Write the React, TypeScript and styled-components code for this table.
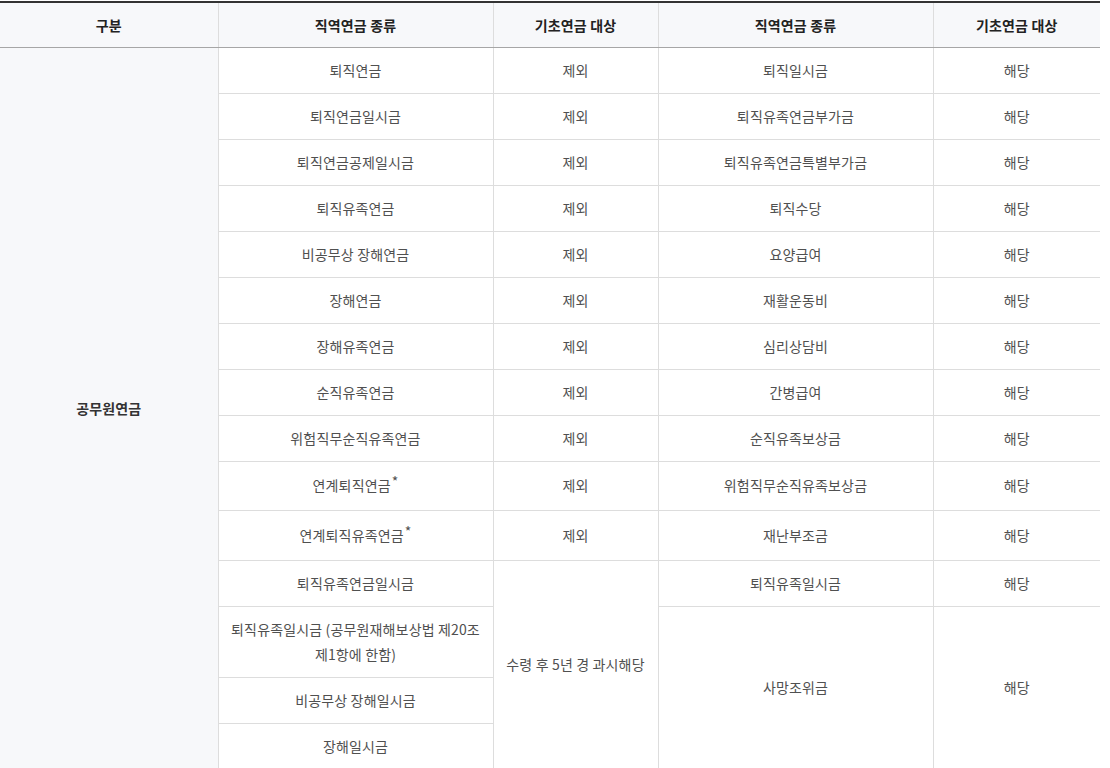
import React from 'react'
import styled, { createGlobalStyle } from 'styled-components'

const GlobalStyle = createGlobalStyle`
  html, body {
    margin: 0;
    padding: 0;
    background: #fff;
  }
  body {
    font-family: 'Noto Sans CJK KR', 'Noto Sans', sans-serif;
  }
`

const Wrapper = styled.div`
  width: 1100px;
  padding-top: 1px;
`

const Table = styled.table`
  width: 1100px;
  table-layout: fixed;
  border-collapse: collapse;
  border-top: 2px solid #333;
  font-size: 14px;
  letter-spacing: 0.15px;
`

const Th = styled.th`
  height: 45px;
  padding: 0 10px;
  box-sizing: border-box;
  background: #f7f8fa;
  color: #222;
  font-weight: 700;
  text-align: center;
  border-bottom: 1px solid #a6a6a6;
  border-left: 1px solid #ddd;
  &:first-child {
    border-left: none;
  }
`

const Tr = styled.tr<{ $star?: boolean }>`
  height: ${p => (p.$star ? '49.5px' : 'auto')};
`

const Td = styled.td<{ $shaded?: boolean }>`
  padding: 10px;
  line-height: 25px;
  text-align: center;
  vertical-align: middle;
  color: ${p => (p.$shaded ? '#333' : '#505050')};
  font-weight: ${p => (p.$shaded ? 700 : 400)};
  background: ${p => (p.$shaded ? '#f7f8fa' : '#fff')};
  border-bottom: 1px solid #ddd;
  border-left: ${p => (p.$shaded ? 'none' : '1px solid #ddd')};
  word-break: keep-all;
`

const Mark = styled.sup`
  font-size: 14px;
  line-height: 0;
  vertical-align: 4px;
  margin-left: 1px;
`

type Row = { left: string; star?: boolean; right: string }

const rows: Row[] = [
  { left: '퇴직연금', right: '퇴직일시금' },
  { left: '퇴직연금일시금', right: '퇴직유족연금부가금' },
  { left: '퇴직연금공제일시금', right: '퇴직유족연금특별부가금' },
  { left: '퇴직유족연금', right: '퇴직수당' },
  { left: '비공무상 장해연금', right: '요양급여' },
  { left: '장해연금', right: '재활운동비' },
  { left: '장해유족연금', right: '심리상담비' },
  { left: '순직유족연금', right: '간병급여' },
  { left: '위험직무순직유족연금', right: '순직유족보상금' },
  { left: '연계퇴직연금', star: true, right: '위험직무순직유족보상금' },
  { left: '연계퇴직유족연금', star: true, right: '재난부조금' }
]

const App: React.FC = () => {
  return (
    <Wrapper>
      <GlobalStyle />
      <Table>
        <colgroup>
          <col style={{ width: 218 }} />
          <col style={{ width: 275 }} />
          <col style={{ width: 165 }} />
          <col style={{ width: 275 }} />
          <col style={{ width: 167 }} />
        </colgroup>
        <thead>
          <tr>
            <Th>구분</Th>
            <Th>직역연금 종류</Th>
            <Th>기초연금 대상</Th>
            <Th>직역연금 종류</Th>
            <Th>기초연금 대상</Th>
          </tr>
        </thead>
        <tbody>
          {rows.map((row, i) => (
            <Tr key={row.left} $star={row.star}>
              {i === 0 && (
                <Td $shaded rowSpan={15}>
                  공무원연금
                </Td>
              )}
              <Td>
                {row.left}
                {row.star && <Mark>*</Mark>}
              </Td>
              <Td>제외</Td>
              <Td>{row.right}</Td>
              <Td>해당</Td>
            </Tr>
          ))}
          <Tr>
            <Td>퇴직유족연금일시금</Td>
            <Td rowSpan={4}>수령 후 5년 경 과시해당</Td>
            <Td>퇴직유족일시금</Td>
            <Td>해당</Td>
          </Tr>
          <Tr>
            <Td>
              퇴직유족일시금 (공무원재해보상법 제20조
              <br />
              제1항에 한함)
            </Td>
            <Td rowSpan={3}>사망조위금</Td>
            <Td rowSpan={3}>해당</Td>
          </Tr>
          <Tr>
            <Td>비공무상 장해일시금</Td>
          </Tr>
          <Tr>
            <Td>장해일시금</Td>
          </Tr>
        </tbody>
      </Table>
    </Wrapper>
  )
}

export default App
